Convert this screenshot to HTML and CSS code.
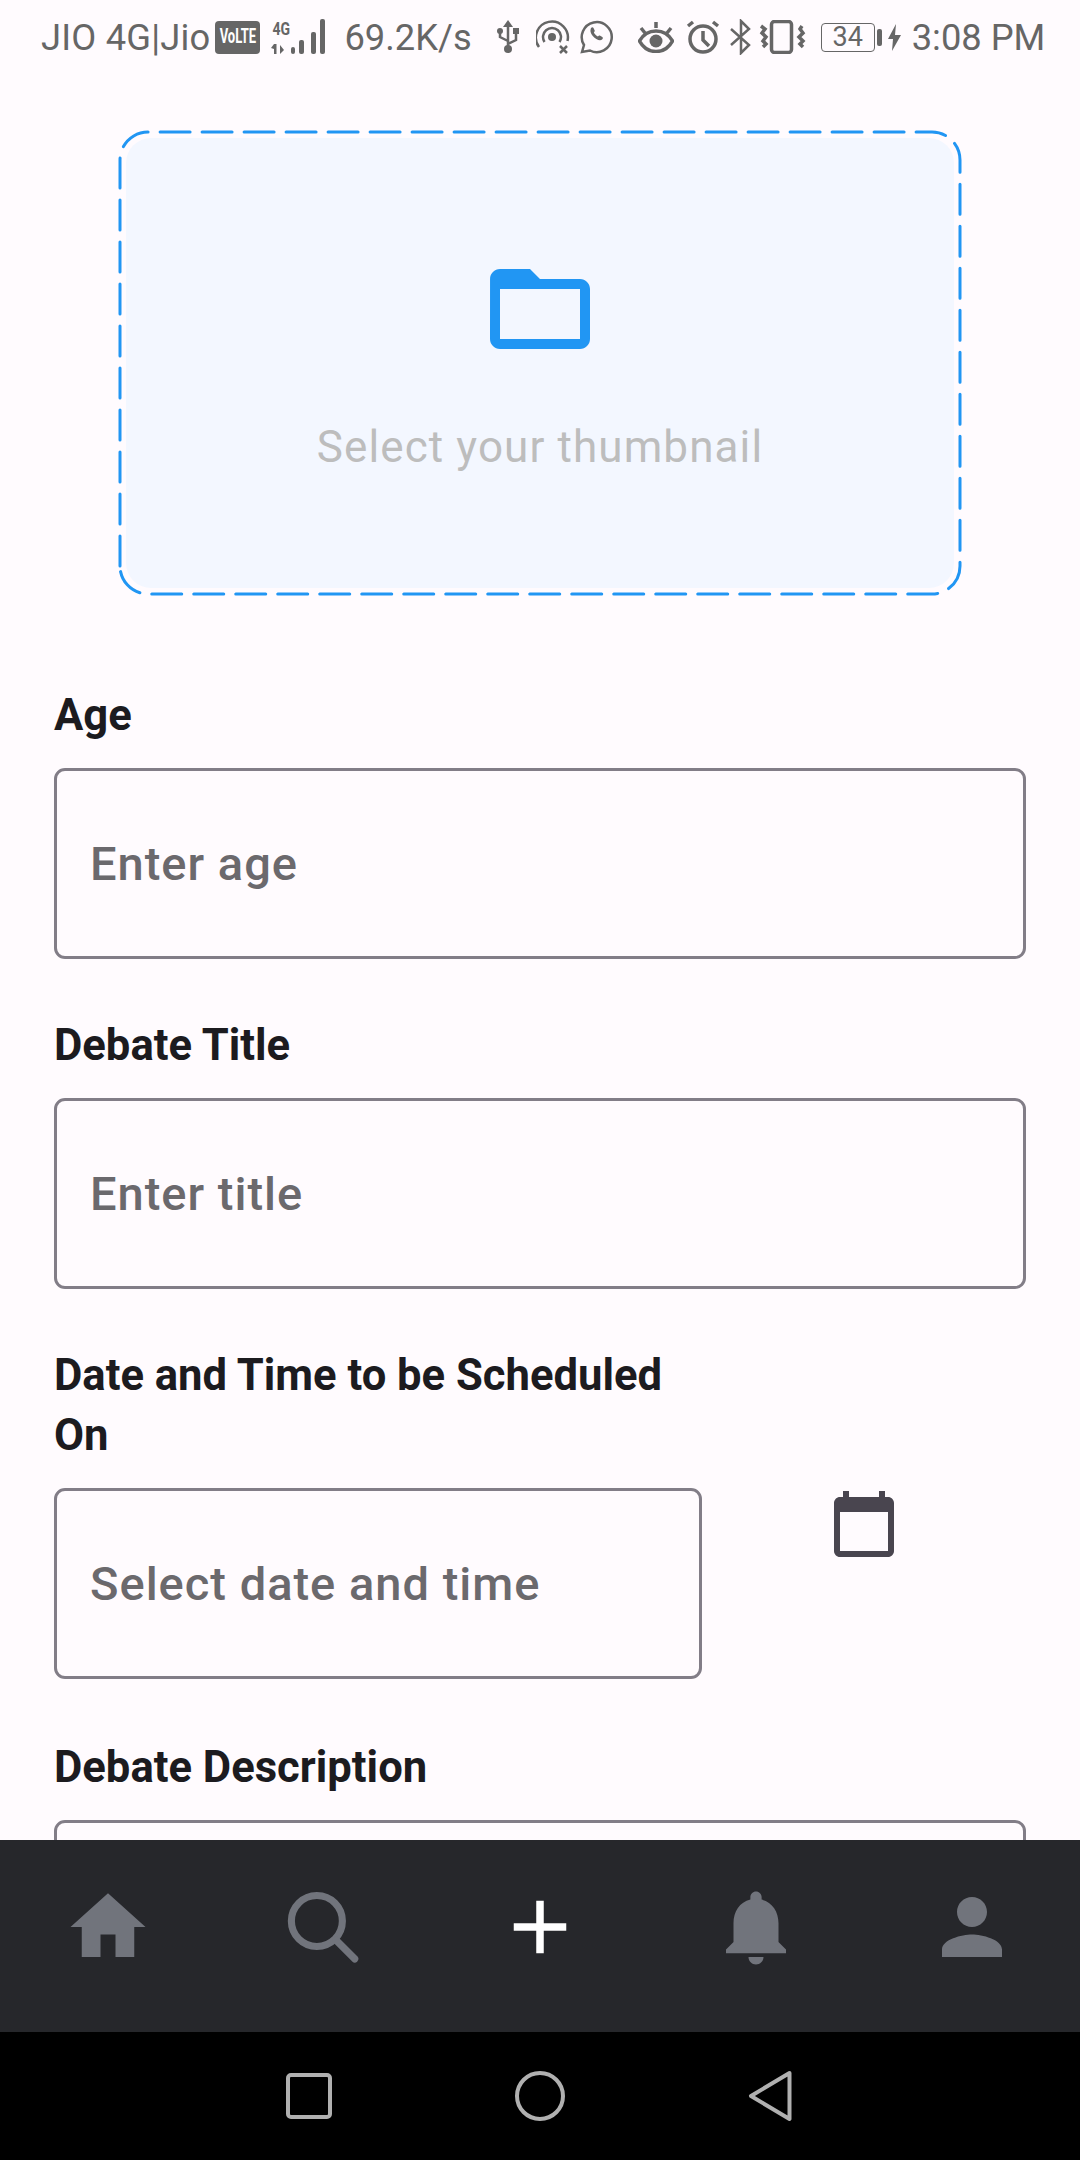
FILE: index.html
```html
<!DOCTYPE html>
<html lang="en">
<head>
    <meta charset="UTF-8">
    <meta name="viewport" content="width=device-width, initial-scale=1.0">
    <title>Create Debate</title>
    <link rel="stylesheet" href="styles.css">
</head>
<body>
    <!-- status bar -->
    <div class="status-bar">
        <span class="carrier">JIO 4G|Jio</span>
        <span class="volte"><span class="volte-text">VoLTE</span></span>
        <span class="signal">
            <span class="signal-type">4G</span>
            <svg class="signal-bars" width="58" height="36" viewBox="0 0 58 36">
                <path class="st-fill" d="M4 25v10h2.500V25zM1 29l3-4v5zM10 26l4 5-4 4z"/>
                <rect class="st-fill" x="21" y="28" width="4" height="7" rx="2"/>
                <rect class="st-fill" x="29" y="21" width="5" height="14" rx="2"/>
                <rect class="st-fill" x="41" y="13" width="5" height="22" rx="2"/>
                <rect class="st-fill" x="50" y="0" width="5" height="35" rx="2"/>
            </svg>
        </span>
        <span class="speed">69.2K/s</span>
        <svg class="st-usb" width="24" height="34" viewBox="0 0 24 34">
            <path class="st-line" d="M12 5v24M12 21l-8-4v-5M12 24l8-4v-7"/>
            <path class="st-fill" d="M12 0l5 7H7z"/>
            <circle class="st-fill" cx="12" cy="29" r="4"/>
            <circle class="st-fill" cx="4" cy="11" r="3"/>
            <rect class="st-fill" x="17" y="8" width="6" height="6"/>
        </svg>
        <svg class="st-hotspot" width="34" height="34" viewBox="0 0 34 34">
            <circle class="st-fill" cx="16" cy="17" r="4"/>
            <path class="st-line" d="M8.500 22A9 9 0 1 1 23.500 22M3 27A16 16 0 1 1 31.500 21"/>
            <path class="st-line" d="M24 26l7 7M31 26l-7 7"/>
        </svg>
        <svg class="st-whatsapp" width="36" height="36" viewBox="0 0 36 36">
            <path class="st-line" d="M3 33l2-7a15 15 0 1 1 6 5.500z"/>
            <path class="st-fill" d="M12 9c1-1 2-1 2.500 0l1.200 2.600c.2.500 0 1-.8 1.900.8 1.700 2.200 3 4 3.900.9-.9 1.400-1.100 1.900-.8l2.500 1.300c.8.500.7 1.500 0 2.400-1.200 1.500-3.500 1.300-6-.2-3-1.800-5-4.400-5.700-7-.3-1.500 0-3 .4-4.100z"/>
        </svg>
        <svg class="st-eye" width="36" height="32" viewBox="0 0 36 32">
            <path class="st-line thick" d="M1.500 20C6 12 12 10 18 10s12 2 16.500 10C30 28 24 30.500 18 30.500S6 28 1.500 20z"/>
            <circle class="st-fill" cx="18" cy="20" r="6.500"/>
            <path class="st-line thick" d="M18 1v6M3 7l4 5M33 7l-4 5"/>
        </svg>
        <svg class="st-alarm" width="34" height="34" viewBox="0 0 34 34">
            <circle class="st-line thick" cx="17" cy="19" r="13"/>
            <path class="st-line thick" d="M17 11v9l6 6M2 6l5-4M32 6l-5-4"/>
        </svg>
        <svg class="st-bt" width="24" height="36" viewBox="0 0 24 36">
            <path class="st-line" d="M2 10l18 16-8 8V2l8 8L2 26"/>
        </svg>
        <svg class="st-vibrate" width="47" height="34" viewBox="0 0 47 34">
            <rect class="st-line thick" x="12.500" y="1.500" width="20" height="31" rx="3"/>
            <path class="st-line thick" d="M2 6l4 3-3 4 4 4-3 4 3 3-3 3M43 6l-2 3 3 4-4 4 4 4-3 3 3 3"/>
        </svg>
        <span class="battery"><span class="battery-level">34</span></span>
        <span class="battery-nub"></span>
        <svg class="st-bolt" width="13" height="27" viewBox="0 0 13 27">
            <path class="st-fill" d="M8 0L0 15h5l-1 12 9-16H7z"/>
        </svg>
        <span class="clock">3:08 PM</span>
    </div>

    <main class="form-page">
        <div class="thumb-box">
            <svg class="thumb-dash" width="844" height="466" viewBox="0 0 844 466">
                <path d="M2 436V30A28 28 0 0 1 30 2H814A28 28 0 0 1 842 30V436A28 28 0 0 1 814 464H30A28 28 0 0 1 2 436"/>
            </svg>
            <div class="thumb-inner">
                <svg class="folder-icon" width="120" height="120" viewBox="0 0 24 24">
                    <path d="M20 6h-8l-2-2H4c-1.100 0-1.990.9-1.990 2L2 18c0 1.100.9 2 2 2h16c1.100 0 2-.9 2-2V8c0-1.100-.9-2-2-2zm0 12H4V8h16v10z"/>
                </svg>
                <div class="thumb-text">Select your thumbnail</div>
            </div>
        </div>

        <div class="form-group">
            <div class="field-label">Age</div>
            <div class="field"><span class="placeholder">Enter age</span></div>
        </div>

        <div class="form-group">
            <div class="field-label">Debate Title</div>
            <div class="field"><span class="placeholder">Enter title</span></div>
        </div>

        <div class="form-group date-group">
            <div class="field-label">Date and Time to be Scheduled On</div>
            <div class="field"><span class="placeholder">Select date and time</span></div>
            <svg class="calendar-icon" width="72" height="72" viewBox="0 0 24 24">
                <path d="M20 3h-1V1h-2v2H7V1H5v2H4c-1.100 0-2 .9-2 2v16c0 1.100.9 2 2 2h16c1.100 0 2-.9 2-2V5c0-1.100-.9-2-2-2zm0 18H4V8h16v13z"/>
            </svg>
        </div>

        <div class="form-group">
            <div class="field-label">Debate Description</div>
            <div class="field"></div>
        </div>
    </main>

    <!-- bottom tabs -->
    <nav class="tab-bar">
        <div class="tab">
            <svg class="tab-icon" width="90" height="90" viewBox="0 0 24 24"><path d="M10 20v-6h4v6h5v-8h3L12 3 2 12h3v8z"/></svg>
        </div>
        <div class="tab">
            <svg class="tab-icon search-icon" width="90" height="90" viewBox="0 0 24 24">
                <circle cx="10.100" cy="10.400" r="6.800"/>
                <path d="M15.200 15.500l5 5"/>
            </svg>
        </div>
        <div class="tab">
            <svg class="tab-icon active" width="90" height="90" viewBox="0 0 24 24"><path d="M19 13h-6v6h-2v-6H5v-2h6V5h2v6h6v2z"/></svg>
        </div>
        <div class="tab">
            <svg class="tab-icon" width="90" height="90" viewBox="0 0 24 24"><path d="M12 22c1.100 0 2-.9 2-2h-4c0 1.100.89 2 2 2zm6-6v-5c0-3.070-1.640-5.640-4.500-6.320V4c0-.83-.67-1.500-1.500-1.500s-1.500.67-1.500 1.500v.68C7.630 5.360 6 7.920 6 11v5l-2 2v1h16v-1l-2-2z"/></svg>
        </div>
        <div class="tab">
            <svg class="tab-icon" width="90" height="90" viewBox="0 0 24 24"><path d="M12 12c2.210 0 4-1.790 4-4s-1.790-4-4-4-4 1.790-4 4 1.790 4 4 4zm0 2c-2.670 0-8 1.340-8 4v2h16v-2c0-2.660-5.330-4-8-4z"/></svg>
        </div>
    </nav>

    <div class="system-nav">
        <svg class="sys-icon" width="46" height="46" viewBox="0 0 46 46"><rect x="2" y="2" width="42" height="42" rx="3"/></svg>
        <svg class="sys-icon" width="52" height="52" viewBox="0 0 52 52"><circle cx="26" cy="26" r="23"/></svg>
        <svg class="sys-icon" width="44" height="52" viewBox="0 0 44 52"><path d="M41.500 3L3 26l38.500 23z"/></svg>
    </div>
</body>
</html>
```

FILE: styles.css
```css
* {
    box-sizing: border-box;
}
html, body {
    margin: 0;
    height: 2160px;
}
body {
    display: flex;
    flex-direction: column;
    overflow: hidden;
    background-color: #fffbfe;
    font-family: Roboto, "Noto Sans", sans-serif;
}

/* status bar */
.status-bar {
    display: flex;
    align-items: center;
    flex: none;
    height: 74px;
    padding-left: 41px;
    color: #666666;
    font-size: 36.300px;
    white-space: nowrap;
}
.st-fill {
    fill: #666666;
}
.st-line {
    fill: none;
    stroke: #666666;
    stroke-width: 2.500;
}
.thick {
    stroke-width: 3.500;
}
.carrier {
    letter-spacing: 0.200px;
}
.volte {
    display: flex;
    align-items: center;
    justify-content: center;
    width: 45px;
    height: 33px;
    margin-left: 5px;
    border-radius: 4px;
    background-color: #666666;
}
.volte-text {
    color: #ffffff;
    font-size: 13px;
    font-weight: 700;
    line-height: 14px;
    transform: scaleY(1.500);
}
.signal {
    display: flex;
    flex-direction: column;
    width: 58px;
    height: 36px;
    margin-left: 10px;
}
.signal-type {
    height: 0;
    padding-left: 2px;
    font-size: 14px;
    font-weight: 700;
    line-height: 15px;
    transform: scaleY(1.300);
    transform-origin: left top;
}
.speed {
    margin-left: 16px;
}
.st-usb {
    margin-left: 24px;
}
.st-hotspot {
    margin-left: 16px;
}
.st-whatsapp {
    margin-left: 9px;
}
.st-eye {
    margin-left: 23px;
}
.st-alarm {
    margin-left: 12px;
}
.st-bt {
    margin-left: 9px;
}
.st-vibrate {
    margin-left: 6px;
}
.battery {
    display: flex;
    align-items: center;
    justify-content: center;
    width: 54px;
    height: 29px;
    margin-left: 15px;
    border: 1.500px solid #666666;
    border-radius: 4px;
}
.battery-level {
    font-size: 27px;
}
.battery-nub {
    width: 5px;
    height: 17px;
    margin-left: 2px;
    border-radius: 2px;
    background-color: #666666;
}
.st-bolt {
    margin-left: 6px;
}
.clock {
    margin-left: 11px;
}

/* form */
.form-page {
    flex: 1;
    min-height: 0;
    overflow: hidden;
    padding: 56px 54px 0;
}
.thumb-box {
    position: relative;
    width: 844px;
    height: 466px;
    margin: 0 auto 88px;
    padding: 8px;
}
.thumb-dash {
    position: absolute;
    top: 0;
    left: 0;
}
.thumb-dash path {
    fill: none;
    stroke: #2196f3;
    stroke-width: 3;
    stroke-dasharray: 30 12;
    stroke-linecap: round;
}
.thumb-inner {
    display: flex;
    flex-direction: column;
    align-items: center;
    height: 100%;
    padding-top: 111px;
    border-radius: 25px;
    background-color: #f3f7ff;
}
.folder-icon {
    fill: #2196f3;
}
.thumb-text {
    margin-top: 52px;
    color: #bdbdbd;
    font-size: 44px;
    letter-spacing: 1.100px;
}
.form-group {
    margin-bottom: 55px;
}
.field-label {
    margin-bottom: 22px;
    padding-top: 2px;
    color: #1c1b1f;
    font-size: 43.600px;
    font-weight: 700;
    line-height: 60px;
}
.field {
    display: flex;
    align-items: center;
    height: 191px;
    padding-left: 33px;
    border: 3px solid #827d87;
    border-radius: 11px;
}
.placeholder {
    color: #6b696d;
    font-size: 47px;
    font-weight: 500;
    letter-spacing: 1px;
}
.date-group {
    display: grid;
    grid-template-columns: 648px 324px;
    margin-bottom: 57px;
}
.date-group .field-label {
    grid-column: 1;
}
.date-group .field {
    grid-column: 1;
}
.calendar-icon {
    grid-column: 2;
    grid-row: 2;
    justify-self: center;
    fill: #49454f;
}

/* bottom tabs */
.tab-bar {
    display: flex;
    flex: none;
    height: 192px;
    padding-top: 42px;
    background-color: #26272b;
}
.tab {
    display: flex;
    flex: 1;
    justify-content: center;
}
.tab-icon {
    fill: #71747c;
}
.tab-icon.active {
    fill: #ffffff;
}
.search-icon {
    fill: none;
    stroke: #71747c;
    stroke-width: 1.900;
    stroke-linecap: round;
}

/* android nav buttons */
.system-nav {
    display: flex;
    flex: none;
    align-items: center;
    gap: 182px;
    height: 128px;
    padding-left: 286px;
    background-color: #000000;
}
.sys-icon {
    fill: none;
    stroke: #b0b0b0;
    stroke-width: 4;
    stroke-linejoin: round;
}
```
